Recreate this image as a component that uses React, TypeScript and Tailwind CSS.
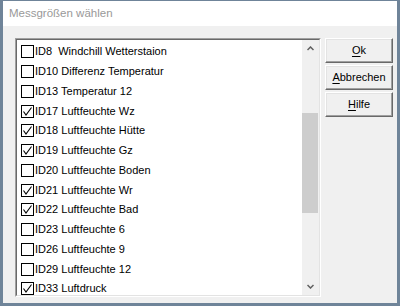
import React from 'react'

interface Item {
  label: string
  checked: boolean
}

const items: Item[] = [
  { label: 'ID8  Windchill Wetterstaion', checked: false },
  { label: 'ID10 Differenz Temperatur', checked: false },
  { label: 'ID13 Temperatur 12', checked: false },
  { label: 'ID17 Luftfeuchte Wz', checked: true },
  { label: 'ID18 Luftfeuchte Hütte', checked: true },
  { label: 'ID19 Luftfeuchte Gz', checked: true },
  { label: 'ID20 Luftfeuchte Boden', checked: false },
  { label: 'ID21 Luftfeuchte Wr', checked: true },
  { label: 'ID22 Luftfeuchte Bad', checked: true },
  { label: 'ID23 Luftfeuchte 6', checked: false },
  { label: 'ID26 Luftfeuchte 9', checked: false },
  { label: 'ID29 Luftfeuchte 12', checked: false },
  { label: 'ID33 Luftdruck', checked: true },
]

const CheckBox: React.FC<{ checked: boolean }> = ({ checked }) => (
  <div className="w-[13px] h-[13px] shrink-0 border border-black bg-white">
    {checked && (
      <svg width="11" height="11" viewBox="0 0 11 11" className="block">
        <path d="M1.5 5.5 L4 9 L9.5 1.5" fill="none" stroke="#000" strokeWidth="1.1" />
      </svg>
    )}
  </div>
)

const Button: React.FC<{ hot: string; rest: string }> = ({ hot, rest }) => (
  <button className="h-[25px] w-full flex items-center justify-center bg-[#f0f0f0] border border-t-white border-l-white border-r-[#696969] border-b-[#696969] shadow-[inset_-1px_-1px_0_#a0a0a0,inset_1px_1px_0_#e3e3e3] text-[11px] text-black">
    <span className="underline underline-offset-2">{hot}</span>
    {rest}
  </button>
)

export default function App() {
  return (
    <div
      className="w-[400px] h-[306px] bg-[#6f8499] pt-[1px] px-[3px] pb-[3px] flex flex-col"
      style={{ fontFamily: '"Liberation Sans", Arial, sans-serif' }}
    >
      {/* title bar */}
      <div className="h-[25px] bg-white flex items-center pl-[6px] text-[11.5px] text-[#999999]">
        Messgrößen wählen
      </div>

      <div className="flex-1 bg-[#f0f0f0] flex gap-[4px] pl-[12px] pt-[12px] pr-[4px]">
        {/* list box */}
        <div className="w-[306px] h-[259px] flex border border-t-[#a0a0a0] border-l-[#a0a0a0] border-r-white border-b-white">
          <div className="flex-1 flex border border-t-[#696969] border-l-[#696969] border-r-[#e3e3e3] border-b-[#e3e3e3] bg-white overflow-hidden">
            <div className="flex-1 pt-[2px] overflow-hidden">
              {items.map(it => (
                <div key={it.label} className="h-[19.75px] flex items-center pl-[4px]">
                  <CheckBox checked={it.checked} />
                  <span className="ml-[1px] text-[11px] text-black whitespace-pre leading-none">{it.label}</span>
                </div>
              ))}
            </div>
            {/* scrollbar */}
            <div className="w-[17px] bg-[#f0f0f0] flex flex-col">
              <div className="h-[17px] flex items-center justify-center">
                <svg width="7" height="5" viewBox="0 0 7 5">
                  <path d="M0.5 4 L3.5 1 L6.5 4" fill="none" stroke="#606060" strokeWidth="1.5" />
                </svg>
              </div>
              <div className="flex-1 pt-[56px]">
                <div className="h-[100px] w-[16px] bg-[#cdcdcd]" />
              </div>
              <div className="h-[17px] flex items-center justify-center">
                <svg width="7" height="5" viewBox="0 0 7 5">
                  <path d="M0.5 1 L3.5 4 L6.5 1" fill="none" stroke="#606060" strokeWidth="1.5" />
                </svg>
              </div>
            </div>
          </div>
        </div>

        {/* buttons */}
        <div className="flex-1 flex flex-col gap-[2px]">
          <Button hot="O" rest="k" />
          <Button hot="A" rest="bbrechen" />
          <Button hot="H" rest="ilfe" />
        </div>
      </div>
    </div>
  )
}
